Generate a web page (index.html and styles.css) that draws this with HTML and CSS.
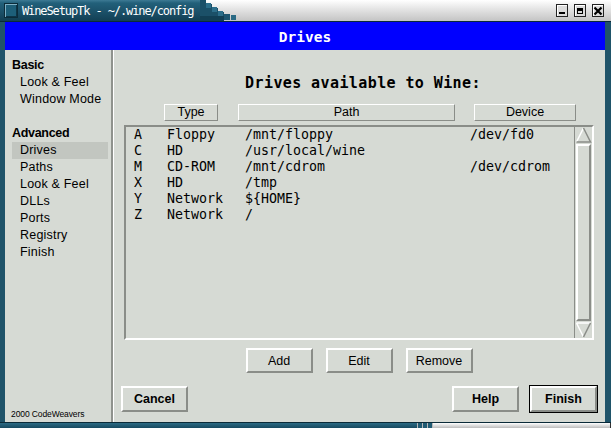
FILE: index.html
```html
<!DOCTYPE html>
<html>
<head>
<meta charset="utf-8">
<link rel="stylesheet" href="styles.css">
</head>
<body>
<div class="win">
  <div class="titlebar">
    <div class="tb-left">
      <span class="tb-icon"></span>
      <span class="tb-title">WineSetupTk - ~/.wine/config</span>
    </div>
    <svg class="tb-steps" width="40" height="21" viewBox="0 0 40 21">
      <polygon points="0,0 6,0 6,4 12,4 12,8 18,8 18,12 24,12 24,16 0,16" fill="#1b5068"/>
      <polygon points="0,16 24,16 24,21 0,21" fill="#123f54"/>
      <rect x="6" y="3" width="5" height="5" fill="#2c6e8a"/>
      <rect x="12" y="7" width="5" height="5" fill="#2c6e8a"/>
      <rect x="18" y="11" width="5" height="5" fill="#2c6e8a"/>
      <rect x="24" y="14" width="6" height="6" fill="#1e5670"/>
      <rect x="31" y="15" width="5" height="5" fill="#2a6a84"/>
    </svg>
    <div class="tb-right">
      <span class="wbtn"><svg width="10" height="10" viewBox="0 0 10 10"><rect x="2" y="6" width="6" height="2" fill="#000"/></svg></span>
      <span class="wbtn"><svg width="10" height="10" viewBox="0 0 10 10"><rect x="2" y="2" width="6" height="6" fill="#000"/><rect x="3" y="5" width="4" height="2" fill="#d8d8d8"/></svg></span>
      <span class="wbtn"><svg width="10" height="10" viewBox="0 0 10 10"><path d="M1.5 1.5 L8.5 8.5 M8.5 1.5 L1.5 8.5" stroke="#000" stroke-width="2.2"/></svg></span>
    </div>
  </div>
  <div class="frame">
    <div class="header">Drives</div>
    <div class="body">
      <nav class="sidebar">
        <div class="group">Basic</div>
        <div class="item">Look &amp; Feel</div>
        <div class="item">Window Mode</div>
        <div class="spacer"></div>
        <div class="group">Advanced</div>
        <div class="item active">Drives</div>
        <div class="item">Paths</div>
        <div class="item">Look &amp; Feel</div>
        <div class="item">DLLs</div>
        <div class="item">Ports</div>
        <div class="item">Registry</div>
        <div class="item">Finish</div>
        <div class="copyright">2000 CodeWeavers</div>
      </nav>
      <div class="sep"></div>
      <main class="main">
        <div class="heading">Drives available to Wine:</div>
        <div class="colheads">
          <div class="colhead c-type">Type</div>
          <div class="colhead c-path">Path</div>
          <div class="colhead c-dev">Device</div>
        </div>
        <div class="listframe">
          <div class="list">
            <div class="row"><span>A</span><span>Floppy</span><span>/mnt/floppy</span><span>/dev/fd0</span></div>
            <div class="row"><span>C</span><span>HD</span><span>/usr/local/wine</span><span></span></div>
            <div class="row"><span>M</span><span>CD-ROM</span><span>/mnt/cdrom</span><span>/dev/cdrom</span></div>
            <div class="row"><span>X</span><span>HD</span><span>/tmp</span><span></span></div>
            <div class="row"><span>Y</span><span>Network</span><span>${HOME}</span><span></span></div>
            <div class="row"><span>Z</span><span>Network</span><span>/</span><span></span></div>
          </div>
          <div class="scrollbar">
            <svg class="arrow" width="17" height="16" viewBox="0 0 17 16">
              <polygon points="8.5,1 15.5,15 1.5,15" fill="#d6dad4"/>
              <path d="M8.5 1 L1.5 15" stroke="#ffffff" stroke-width="1.5"/>
              <path d="M8.5 1 L15.5 15 L1.5 15" stroke="#8a8d88" stroke-width="1.5" fill="none"/>
            </svg>
            <div class="slider"></div>
            <svg class="arrow" width="17" height="16" viewBox="0 0 17 16">
              <polygon points="1.5,1 15.5,1 8.5,15" fill="#d6dad4"/>
              <path d="M1.5 1 L15.5 1 M1.5 1 L8.5 15" stroke="#ffffff" stroke-width="1.5"/>
              <path d="M15.5 1 L8.5 15" stroke="#8a8d88" stroke-width="1.5"/>
            </svg>
          </div>
        </div>
        <div class="actions">
          <button class="btn">Add</button>
          <button class="btn">Edit</button>
          <button class="btn">Remove</button>
        </div>
        <div class="footer">
          <button class="btn bold">Cancel</button>
          <div class="footer-right">
            <button class="btn bold">Help</button>
            <span class="default"><button class="btn bold">Finish</button></span>
          </div>
        </div>
      </main>
    </div>
  </div>
  <div class="bottombar">
    <div class="bb-left"></div>
    <div class="bb-dots"><i></i><i></i><i></i></div>
    <div class="bb-right"></div>
  </div>
</div>
</body>
</html>
```

FILE: styles.css
```css
* { box-sizing: border-box; }
html, body { margin: 0; padding: 0; }
body {
  width: 611px;
  height: 428px;
  overflow: hidden;
  background: #000;
  font-family: "Liberation Sans", Arial, sans-serif;
}
.win {
  width: 611px;
  height: 428px;
  display: flex;
  flex-direction: column;
}

/* title bar */
.titlebar {
  height: 22px;
  flex: none;
  display: flex;
  border-bottom: 1px solid #0a2a38;
  background: #103a4e;
}
.tb-left {
  width: 200px;
  height: 21px;
  display: flex;
  align-items: center;
  gap: 4px;
  padding-left: 4px;
  background: linear-gradient(#3d7a94 0, #22607a 3px, #1b5068 12px, #123f54 100%);
}
.tb-icon {
  width: 14px;
  height: 15px;
  background: #1d5f79;
  border: 1px solid #0b2c3a;
  box-shadow: inset 1px 1px 0 #7fb0c4, inset -1px -1px 0 #0e3546;
}
.tb-title {
  color: #ffffff;
  font-family: "DejaVu Sans Mono", monospace;
  font-size: 12px;
  letter-spacing: -1.1px;
  padding-top: 1px;
}
.tb-steps {
  display: block;
  flex: none;
  background: linear-gradient(#ffffff, #e6e6e6 40%, #c4c4c4);
}
.tb-right {
  flex: 1;
  height: 21px;
  display: flex;
  justify-content: flex-end;
  align-items: flex-start;
  gap: 6px;
  padding: 4px 7px 0 0;
  background: linear-gradient(#ffffff, #e6e6e6 40%, #c4c4c4);
}
.wbtn {
  width: 12px;
  height: 13px;
  display: flex;
  align-items: center;
  justify-content: center;
  background: #dcdcdc;
  border: 1px solid #222;
  box-shadow: inset 1px 1px 0 #fff;
}

/* frame */
.frame {
  height: 400px;
  flex: none;
  display: flex;
  flex-direction: column;
  border-left: 5px solid #1f5369;
  border-right: 6px solid #1f5369;
  box-shadow: inset 1px 0 0 #0b2a37, inset -1px 0 0 #0b2a37;
}
.header {
  height: 28px;
  flex: none;
  background: #0000ff;
  color: #ffffff;
  font-family: "DejaVu Sans Mono", monospace;
  font-weight: bold;
  font-size: 14.5px;
  display: flex;
  align-items: center;
  justify-content: center;
  padding-top: 1px;
}
.body {
  flex: 1;
  display: flex;
  background: #d6dad4;
}

/* sidebar */
.sidebar {
  width: 106px;
  display: flex;
  flex-direction: column;
  padding-top: 7px;
  font-size: 12.5px;
  color: #000;
}
.group {
  height: 17px;
  line-height: 17px;
  padding-left: 7px;
  font-weight: bold;
  letter-spacing: -0.3px;
}
.item {
  height: 17px;
  line-height: 17px;
  margin-left: 7px;
  width: 96px;
  padding-left: 8px;
  letter-spacing: 0.2px;
}
.item.active { background: #c2c6c0; }
.spacer { height: 17px; }
.copyright {
  margin-top: auto;
  padding: 0 0 3px 6px;
  font-size: 8.5px;
  letter-spacing: -0.1px;
}
.sep {
  width: 3px;
  border-left: 2px solid #8f928d;
  border-right: 1px solid #ffffff;
}

/* main */
.main {
  flex: 1;
  display: flex;
  flex-direction: column;
  padding: 24px 11px 0 10px;
}
.heading {
  height: 18px;
  line-height: 18px;
  text-align: center;
  font-family: "DejaVu Sans Mono", monospace;
  font-weight: bold;
  font-size: 15px;
  letter-spacing: 0.4px;
  margin-left: 8px;
}
.colheads {
  display: flex;
  margin-top: 12px;
  padding-left: 40px;
  gap: 20px;
}
.colhead {
  height: 17px;
  line-height: 15px;
  text-align: center;
  font-size: 12.5px;
  border: 1px solid;
  border-color: #ffffff #8a8d88 #8a8d88 #ffffff;
}
.c-type { width: 54px; }
.c-path { width: 217px; }
.c-dev { width: 102px; margin-left: -1px; }

.listframe {
  margin-top: 4px;
  height: 215px;
  display: flex;
  border: 2px solid;
  border-color: #8a8d88 #ffffff #ffffff #8a8d88;
}
.list {
  flex: 1;
  padding: 0 0 0 8px;
  font-family: "DejaVu Sans Mono", monospace;
  font-size: 13.3px;
}
.row {
  display: grid;
  grid-template-columns: 33px 78px 225px 1fr;
  height: 16px;
  line-height: 16px;
}
.scrollbar {
  width: 18px;
  display: flex;
  flex-direction: column;
  border-left: 1px solid #8a8d88;
}
.arrow { display: block; }
.slider {
  flex: 1;
  margin: 1px 1px;
  border: 2px solid;
  border-color: #ffffff #8a8d88 #8a8d88 #ffffff;
}

.actions {
  margin-top: 8px;
  display: flex;
  justify-content: center;
  gap: 13px;
}
.btn {
  width: 67px;
  height: 25px;
  padding: 0;
  background: #d6dad4;
  font-family: "Liberation Sans", Arial, sans-serif;
  font-size: 12.5px;
  color: #000;
  border: 2px solid;
  border-color: #ffffff #8a8d88 #8a8d88 #ffffff;
}
.btn.bold { font-weight: bold; }
.footer {
  margin-top: 12px;
  display: flex;
  align-items: center;
  margin-left: -3px;
  margin-right: -4px;
}
.footer .btn { height: 26px; }
.footer-right {
  margin-left: auto;
  display: flex;
  align-items: center;
  gap: 10px;
}
.default {
  display: flex;
  border: 1px solid #000;
}

/* bottom bar */
.bottombar {
  height: 6px;
  flex: none;
  display: flex;
  border-top: 1px solid #0a2a38;
}
.bb-left {
  width: 417px;
  background: linear-gradient(#2b6a84, #174a60);
}
.bb-dots {
  display: flex;
  gap: 1px;
  padding: 0 1px;
  background: #b8b8b8;
}
.bb-dots i {
  width: 4px;
  background: #1f5a73;
}
.bb-right {
  flex: 1;
  background: linear-gradient(#ffffff, #bcbcbc);
  border-right: 1px solid #333;
}
```
